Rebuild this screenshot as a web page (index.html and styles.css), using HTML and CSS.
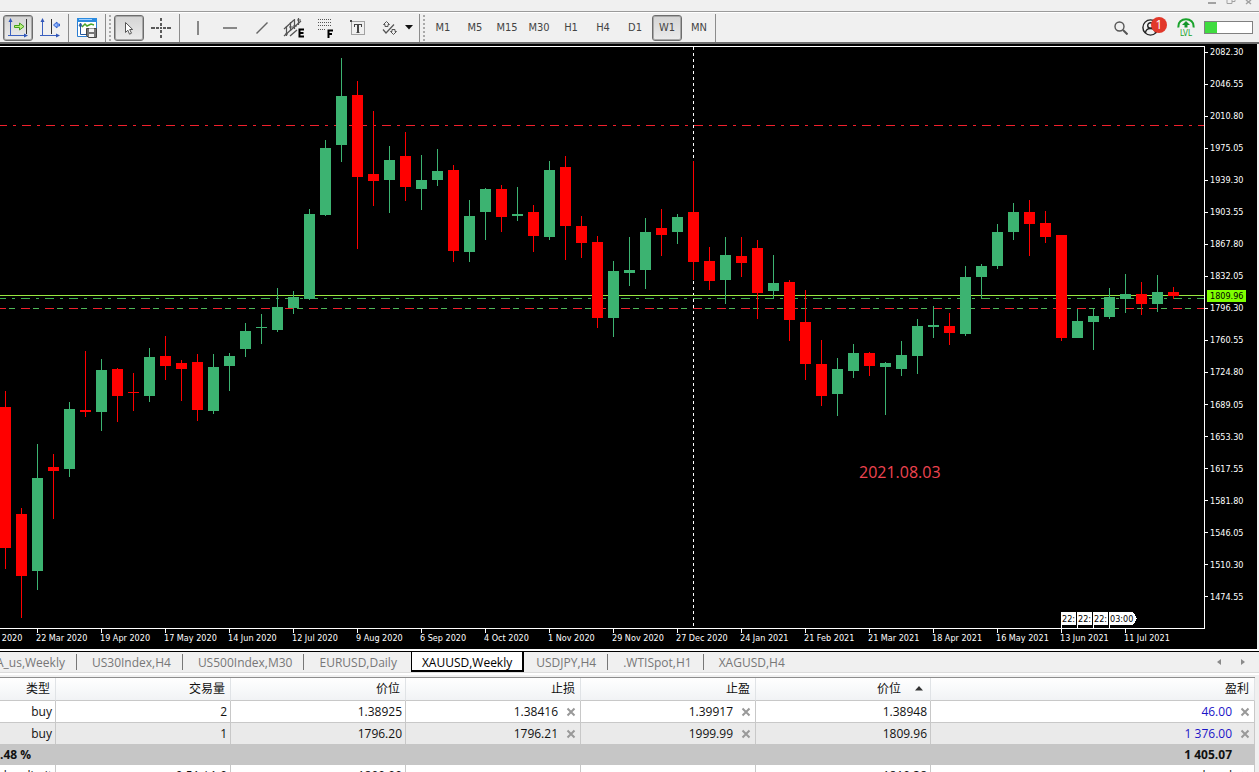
FILE: index.html
```html
<!DOCTYPE html>
<html lang="zh-CN">
<head>
<meta charset="utf-8">
<title>XAUUSD,Weekly</title>
<link rel="stylesheet" href="styles.css">
</head>
<body>
<header class="titlebar">
  <svg class="window-controls" width="48" height="5" viewBox="0 0 48 5" fill="none" stroke="#a2a2a2" aria-hidden="true">
    <path d="M1 3h8" stroke-width="2"/><path d="M20 0v3.500h5V0M25 1.500h3V0"/><path d="M39 4l5-4M44 4l-5-4" stroke-width="1.500"/>
  </svg>
</header>

<nav class="toolbar">
  <div class="group">
    <button class="tool pressed" aria-label="Auto scroll"><svg width="20" height="20" viewBox="0 0 20 20" fill="none">
      <path d="M2.500 18V2M0 17.500h19" stroke="#3a5fc0"/><path d="M2.500 0l-2 4h4zM20 17.500l-4-2v4z" fill="#2f55b8"/><path d="M18.500 1v15" stroke="#333"/><path d="M6.500 7.500h5V5l4.500 3.500-4.500 3.500V9.500h-5z" fill="#b9f07e" stroke="#43a01c"/></svg></button>
    <button class="tool" aria-label="Chart shift"><svg width="20" height="20" viewBox="0 0 20 20" fill="none">
      <path d="M2.500 18V2M0 17.500h19" stroke="#3a5fc0"/><path d="M2.500 0l-2 4h4zM20 17.500l-4-2v4z" fill="#2f55b8"/><path d="M11.500 1v15" stroke="#333"/><path d="M19.500 6h-2.500V4l-3.500 3 3.500 3V8h2.500z" fill="#8fb6ff" stroke="#3564d0"/></svg></button>
  </div>
  <span class="sep"></span>
  <div class="group">
    <button class="tool" aria-label="Templates"><svg width="20" height="20" viewBox="0 0 20 20" fill="none">
      <path d="M.5.5h19v18H.5z" fill="#fff" stroke="#2b7ed2"/><path d="M0 0h20v4H0z" fill="#2b8be0"/><path d="M2 1.500h13" stroke="#9fd0ff"/><path d="M3.500 6v10.500h6M3.500 5L2 8h3z" stroke="#24589c"/><path d="M5 9l3-3 2 2 4-2 3 1" stroke="#49a52a" stroke-width="1.500"/><path d="M9.500 10.500h10v9h-8l-2-2z" fill="#777" stroke="#444"/><path d="M12 10.500h5V14h-5zM12 16h5v3h-5z" fill="#f2f2f2"/></svg></button>
  </div>
  <span class="sep"></span><span class="grip"></span>
  <div class="group">
    <button class="tool pressed" aria-label="Cursor"><svg width="20" height="20" viewBox="0 0 20 20"><path d="M6.500 4.500v10l2.300-2.300 1.700 4 2-1-1.800-3.700h3z" fill="#fff" stroke="#555"/></svg></button>
    <button class="tool" aria-label="Crosshair"><svg width="20" height="20" viewBox="0 0 20 20" fill="none" stroke="#5a5a5a" stroke-width="2"><path d="M10 0v3M10 5v3M10 12v3M10 17v3M0 10h4M5 10h3M12 10h3M16 10h4M9 10h2"/></svg></button>
  </div>
  <span class="sep"></span>
  <div class="group">
    <button class="tool" aria-label="Vertical line"><svg width="20" height="20" viewBox="0 0 20 20"><path d="M10 3v14" stroke="#666" stroke-width="1.500"/></svg></button>
    <button class="tool" aria-label="Horizontal line"><svg width="20" height="20" viewBox="0 0 20 20"><path d="M3 10h14" stroke="#666" stroke-width="1.500"/></svg></button>
    <button class="tool" aria-label="Trendline"><svg width="20" height="20" viewBox="0 0 20 20"><path d="M4.500 15.500l11-11" stroke="#666" stroke-width="1.500"/></svg></button>
    <button class="tool" aria-label="Equidistant channel"><svg width="22" height="20" viewBox="0 0 22 20" fill="none" stroke="#555"><path d="M1 11L11 2M1 18L18 3M7 18l7-6" stroke-width="1.300"/><path d="M3.500 8v10M2 16h3M7.500 4v9M6 9h4M11.500 1v10M10 8h4M15.500 0v7M14 2h4" stroke-width="1.200"/><path d="M21 11.500h-4.500v7H21M16 15h4.500" stroke="#000" stroke-width="2"/></svg></button>
    <button class="tool" aria-label="Fibonacci"><svg width="20" height="20" viewBox="0 0 20 20" fill="none"><path d="M2 1.500h14M2 4.500h14M2 7.500h14" stroke="#555" stroke-dasharray="1 1"/><path d="M2 11.500h8" stroke="#555" stroke-dasharray="1 1"/><path d="M17 12.500h-4.500V20M12 16h4" stroke="#000" stroke-width="2"/></svg></button>
    <button class="tool" aria-label="Text"><svg width="20" height="20" viewBox="0 0 20 20" fill="none"><path d="M3.500 3.500h13v13h-13z" stroke="#555" stroke-dasharray="1 1"/><path d="M2 2h2v2H2z" fill="#444"/><path d="M6 6.500h8M6.500 6v3M13.500 6v3M8.500 14.500h3" stroke="#444"/><path d="M10 6v9" stroke="#444" stroke-width="2"/></svg></button>
    <button class="tool" aria-label="Arrows"><svg width="20" height="20" viewBox="0 0 20 20" fill="none" stroke="#555"><path d="M6.500 3.500l3 3H8v2H5v-2H3.500zM13.500 16.500l3-3H15v-2h-3v2h-1.500z"/><path d="M3 11.500l3 3.500 8-8.500" stroke-width="1.200"/></svg></button>
  </div>
  <button class="caret" aria-label="More objects"><svg width="8" height="5" viewBox="0 0 8 5"><path d="M0 0h8L4 4.500z" fill="#111"/></svg></button>
  <span class="sep"></span><span class="grip"></span>
  <div class="group">
    <button class="tool">M1</button><button class="tool">M5</button><button class="tool">M15</button><button class="tool">M30</button><button class="tool">H1</button><button class="tool">H4</button><button class="tool">D1</button><button class="tool pressed">W1</button><button class="tool">MN</button>
  </div>
  <span class="sep end"></span>
  <div class="status">
    <button class="plain" aria-label="Search"><svg width="14" height="14" viewBox="0 0 14 14" fill="none" stroke="#555"><circle cx="5.500" cy="5.500" r="4.500" stroke-width="1.400"/><path d="M9 9l4.500 4.500" stroke-width="2"/></svg></button>
    <button class="plain account" aria-label="Account"><svg width="17" height="17" viewBox="0 0 17 17" fill="none" stroke="#222" stroke-width="1.400"><circle cx="8.500" cy="8.500" r="7.600"/><circle cx="8.500" cy="6.500" r="2.800"/><path d="M3.500 14c0-6 10-6 10 0"/></svg><span class="badge">1</span></button>
    <div class="level"><svg width="18" height="11" viewBox="0 0 18 11"><path d="M1.500 9.500C0-1.500 18-1.500 16.500 9.500" fill="none" stroke="#1aa32c" stroke-width="2"/><path d="M9 3l4 4h-2.500v2.500h-3V7H5z" fill="#12952a"/></svg><span>LVL</span></div>
    <div class="meter"><span class="meter-fill"></span></div>
  </div>
</nav>

<main class="chart">
  <svg class="plot" viewBox="0 44 1205 589" preserveAspectRatio="xMaxYMin slice" fill="none">
    <path class="guide" d="M693.500 47V627"/>
    <path class="limit" d="M-2 125.500H1204"/>
    <path class="bid" d="M0 295.500H1204"/>
    <path class="entry" d="M-3 298.500H1204"/>
    <path class="limit" d="M-3 308.500H1204"/>
    <path class="entry-short" d="M9 308.500H1204"/>
    <path class="wick down" d="M5.500 391V569M21.500 508V618M53.500 454V519M85.500 351V417M117.500 368V422M133.500 373V411M165.500 336V380M181.500 360V401M197.500 354V421M357.500 81V249M373.500 111V206M405.500 132V201M453.500 165V262M501.500 185V232M533.500 205V252M565.500 156V260M581.500 216V258M597.500 236V328M661.500 209V256M693.500 161V280M709.500 247V290M741.500 237V277M757.500 240V319M789.500 280V341M805.500 290V380M821.500 340V406M869.500 352V376M949.500 313V345M1029.500 200V256M1045.500 211V243M1061.500 235V341M1141.500 282V315M1173.500 287V299"/>
    <path class="wick up" d="M37.500 444V590M69.500 402V477M101.500 359V431M149.500 348V402M213.500 354V414M229.500 353V391M245.500 323V357M261.500 314V344M277.500 288V332M293.500 291V314M309.500 209V300M325.500 140V216M341.500 58V162M389.500 146V213M421.500 155V210M437.500 149V186M469.500 200V262M485.500 188V240M517.500 187V221M549.500 161V240M613.500 261V337M629.500 237V286M645.500 218V289M677.500 214V244M725.500 237V304M773.500 255V299M837.500 358V416M853.500 344V378M885.500 362V415M901.500 341V376M917.500 319V374M933.500 306V338M965.500 266V336M981.500 264V298M997.500 224V269M1013.500 203V240M1077.500 309V338M1093.500 309V350M1109.500 288V319M1125.500 274V313M1157.500 275V312"/>
    <path class="body down" d="M5.500 407V548M21.500 514V576M53.500 467V471M85.500 410V412M117.500 369V396M133.500 392V393M165.500 356V366M181.500 363V369M197.500 362V410M357.500 95V177M373.500 174V181M405.500 156V187M453.500 170V251M501.500 189V217M533.500 212V236M565.500 167V226M581.500 226V243M597.500 242V318M661.500 228V235M693.500 212V262M709.500 261V281M741.500 256V263M757.500 248V293M789.500 282V320M805.500 322V364M821.500 364V396M869.500 353V366M949.500 326V333M1029.500 212V224M1045.500 223V237M1061.500 235V338M1141.500 294V304M1173.500 292V296"/>
    <path class="body up" d="M37.500 478V571M69.500 409V469M101.500 370V412M149.500 357V396M213.500 367V411M229.500 356V366M245.500 331V349M261.500 327V328M277.500 307V330M293.500 297V308M309.500 214V299M325.500 148V215M341.500 96V145M389.500 160V180M421.500 180V189M437.500 171V180M469.500 216V252M485.500 189V212M517.500 214V216M549.500 170V237M613.500 271V318M629.500 270V273M645.500 232V270M677.500 217V232M725.500 255V280M773.500 283V291M837.500 369V394M853.500 353V371M885.500 363V367M901.500 355V369M917.500 326V356M933.500 325V327M965.500 277V334M981.500 266V277M997.500 232V266M1013.500 212V232M1077.500 321V338M1093.500 316V322M1109.500 297V317M1125.500 294V299M1157.500 292V304"/>
    <path class="frame" d="M0 46.500H1204.500V628.500H0"/>
    <path class="frame" d="M37.500 629v4M101.500 629v4M165.500 629v4M229.500 629v4M293.500 629v4M357.500 629v4M421.500 629v4M485.500 629v4M549.500 629v4M613.500 629v4M677.500 629v4M741.500 629v4M805.500 629v4M869.500 629v4M933.500 629v4M997.500 629v4M1061.500 629v4M1125.500 629v4"/>
    <text class="note" x="859" y="478">2021.08.03</text>
    <path d="M1061 612H1133l4 6.500-4 6.500H1062v3h-1z" fill="#fff"/>
    <path d="M1076.500 612v13M1092.500 612v13M1108.500 612v13" stroke="#000"/>
    <path class="frame" d="M1077.500 612v16M1093.500 612v16M1109.500 612v16"/>
    <text class="event" x="1062" y="622">22:</text><text class="event" x="1078" y="622">22:</text><text class="event" x="1094" y="622">22:</text><text class="event" x="1110" y="622">03:00</text>
  </svg>
  <ol class="prices">
    <li>2082.30</li><li>2046.55</li><li>2010.80</li><li>1975.05</li><li>1939.30</li><li>1903.55</li><li>1867.80</li><li>1832.05</li><li>1796.30</li><li>1760.55</li><li>1724.80</li><li>1689.05</li><li>1653.30</li><li>1617.55</li><li>1581.80</li><li>1546.05</li><li>1510.30</li><li>1474.55</li>
  </ol>
  <ol class="dates">
    <li>23 Feb 2020</li><li>22 Mar 2020</li><li>19 Apr 2020</li><li>17 May 2020</li><li>14 Jun 2020</li><li>12 Jul 2020</li><li>9 Aug 2020</li><li>6 Sep 2020</li><li>4 Oct 2020</li><li>1 Nov 2020</li><li>29 Nov 2020</li><li>27 Dec 2020</li><li>24 Jan 2021</li><li>21 Feb 2021</li><li>21 Mar 2021</li><li>18 Apr 2021</li><li>16 May 2021</li><li>13 Jun 2021</li><li>11 Jul 2021</li>
  </ol>
  <output class="price-tag">1809.96</output>
</main>

<nav class="tabs">
  <button class="tab first">A_us,Weekly</button>
  <button class="tab">US30Index,H4</button>
  <button class="tab">US500Index,M30</button>
  <button class="tab last">EURUSD,Daily</button>
  <button class="tab active">XAUUSD,Weekly</button>
  <button class="tab">USDJPY,H4</button>
  <button class="tab">.WTISpot,H1</button>
  <button class="tab last">XAGUSD,H4</button>
  <div class="scrollers">
    <button class="plain" aria-label="Previous"><svg width="4" height="6" viewBox="0 0 4 6"><path d="M4 0v6L0 3z" fill="#8a8a8a"/></svg></button>
    <button class="plain" aria-label="Next"><svg width="4" height="6" viewBox="0 0 4 6"><path d="M0 0v6l4-3z" fill="#8a8a8a"/></svg></button>
  </div>
</nav>

<section class="terminal">
<table class="orders">
  <colgroup><col class="c-type"><col class="c-num"><col class="c-num"><col class="c-num"><col class="c-num"><col class="c-num"><col></colgroup>
  <thead><tr><th>类型</th><th>交易量</th><th>价位</th><th>止损</th><th>止盈</th><th>价位<svg class="sort" width="8" height="5" viewBox="0 0 8 5"><path d="M4 0l4 4.500H0z" fill="#333"/></svg></th><th>盈利</th></tr></thead>
  <tbody>
    <tr><td>buy</td><td>2</td><td>1.38925</td>
      <td>1.38416<button class="close" aria-label="Clear"><svg width="10" height="10" viewBox="0 0 10 10"><path d="M1.500 1.500l7 7M8.500 1.500l-7 7"/></svg></button></td>
      <td>1.39917<button class="close" aria-label="Clear"><svg width="10" height="10" viewBox="0 0 10 10"><path d="M1.500 1.500l7 7M8.500 1.500l-7 7"/></svg></button></td>
      <td>1.38948</td><td class="profit">46.00<button class="close" aria-label="Close"><svg width="10" height="10" viewBox="0 0 10 10"><path d="M1.500 1.500l7 7M8.500 1.500l-7 7"/></svg></button></td></tr>
    <tr class="alt"><td>buy</td><td>1</td><td>1796.20</td>
      <td>1796.21<button class="close" aria-label="Clear"><svg width="10" height="10" viewBox="0 0 10 10"><path d="M1.500 1.500l7 7M8.500 1.500l-7 7"/></svg></button></td>
      <td>1999.99<button class="close" aria-label="Clear"><svg width="10" height="10" viewBox="0 0 10 10"><path d="M1.500 1.500l7 7M8.500 1.500l-7 7"/></svg></button></td>
      <td>1809.96</td><td class="profit">1 376.00<button class="close" aria-label="Close"><svg width="10" height="10" viewBox="0 0 10 10"><path d="M1.500 1.500l7 7M8.500 1.500l-7 7"/></svg></button></td></tr>
    <tr class="summary"><td colspan="6">.48 %</td><td class="total">1 405.07</td></tr>
    <tr><td>buy limit</td><td>0.51 / 1.0</td><td>1800.00</td><td></td><td></td><td>1810.38</td>
      <td>placed<button class="close" aria-label="Delete"><svg width="10" height="10" viewBox="0 0 10 10"><path d="M1.500 1.500l7 7M8.500 1.500l-7 7"/></svg></button></td></tr>
  </tbody>
</table>
</section>
</body>
</html>
```
FILE: styles.css
```css
* { box-sizing: border-box; }

body {
  margin: 0;
  height: 100vh;
  overflow: hidden;
  background: #f0f0f0;
  color: #111;
  font: 12px/20px "Open Sans", "Noto Sans CJK SC", sans-serif;
}

button { margin: 0; padding: 0; border: 0; background: none; font: inherit; color: inherit; }
svg { display: block; }
ol { margin: 0; padding: 0; list-style: none; }

.titlebar { display: flex; justify-content: flex-end; height: 11px; padding-right: 4px; }

/* Toolbar */
.toolbar {
  display: flex;
  align-items: center;
  height: 33px;
  padding: 1px 6px 0 3px;
  border-top: 1px solid #9a9a9a;
  border-bottom: 2px solid #6c6c6c;
  background: #f0f0f0;
  box-shadow: inset 0 1px #fff;
}
.group { display: flex; gap: 2px; }
.tool {
  display: flex;
  align-items: center;
  justify-content: center;
  width: 30px;
  height: 26px;
  border: 1px solid transparent;
  border-radius: 3px;
  color: #444;
  font: 11px/14px "DejaVu Sans Condensed", "DejaVu Sans", sans-serif;
}
.tool svg { flex: none; }
.tool.pressed {
  border: 1px solid #6d6d6d;
  background: linear-gradient(#d4d4d4, #ebebeb);
  box-shadow: inset 0 0 0 1px #a8a8a8;
}
.sep { width: 1px; height: 28px; margin: 0 3px; background: #8c8c8c; }
.sep.end { margin-left: 1px; }
.grip {
  width: 2px;
  height: 26px;
  margin-right: 3px;
  background: repeating-linear-gradient(#aaa 0 2px, transparent 2px 4px);
}
.caret { width: 11px; height: 26px; display: flex; align-items: center; }
.plain { display: block; }
.status { display: flex; align-items: center; margin-left: auto; }
.account { position: relative; margin-left: 14px; }
.badge {
  position: absolute;
  left: 9px;
  top: -2px;
  width: 16px;
  height: 16px;
  border-radius: 50%;
  background: #e2382a;
  color: #fff;
  font-size: 12px;
  line-height: 16px;
  text-align: center;
}
.level {
  display: flex;
  flex-direction: column;
  align-items: center;
  margin-left: 18px;
  color: #1aa32c;
  font: 8px/9px "DejaVu Sans Condensed", "DejaVu Sans", sans-serif;
}
.meter {
  width: 49px;
  height: 13px;
  margin-left: 9px;
  border: 1px solid #808080;
  background: #fff;
}
.meter-fill { display: block; width: 25%; height: 100%; background: #3fdc3f; }

/* Chart */
.chart {
  position: relative;
  display: grid;
  grid-template: auto 16px / minmax(0, 1fr) 52px;
  margin-right: 2px;
  background: #000;
  color: #fff;
  font: 9px/12px "DejaVu Sans Condensed", "DejaVu Sans", sans-serif;
}
.plot { width: 100%; height: 589px; shape-rendering: crispEdges; }
.frame { stroke: #fff; }
.guide { stroke: #fff; stroke-dasharray: 3 3; }
.limit { stroke: #f0202c; stroke-dasharray: 9 6 3 6; }
.bid { stroke: #98e840; }
.entry { stroke: #40b050; stroke-dasharray: 9 6 3 6; }
.entry-short { stroke: #50b858; stroke-dasharray: 6 18; }
.wick { stroke-width: 1; }
.body { stroke-width: 11; }
.down { stroke: #f00; }
.up { stroke: #3cb371; }
.note { fill: #ee4450; font: 16px "Open Sans", sans-serif; }
.event { fill: #000; font: 9px "DejaVu Sans Condensed", "DejaVu Sans", sans-serif; }
.prices {
  display: flex;
  flex-direction: column;
  justify-content: space-between;
  height: 557px;
  margin-top: 2px;
}
.prices li { display: flex; align-items: center; gap: 2px; }
.prices li::before { content: ""; width: 3px; height: 1px; background: #fff; }
.dates { display: flex; grid-column: 1 / -1; margin: -1px 0 0 -28px; overflow: hidden; }
.dates li { flex: none; width: 64px; white-space: nowrap; }
.price-tag {
  position: absolute;
  right: 11px;
  top: 246px;
  width: 39px;
  padding-left: 3px;
  background: #7fff00;
  color: #000;
}

/* Chart tabs */
.tabs {
  display: flex;
  height: 22px;
  margin-top: 2px;
  border-top: 1px solid #000;
  border-bottom: 1px solid #dcdcdc;
  outline: 2px solid #fff;
  color: #777;
}
.tab { position: relative; height: 20px; padding: 0 14px 0 13px; line-height: 21px; white-space: nowrap; }
.tab::after { content: ""; position: absolute; right: 12px; top: 2px; width: 1px; height: 16px; background: #777; }
.tab:not(.last):not(.active) { padding: 0 24px 0 3px; }
.tab.last, .tab.active + .tab { padding-left: 3px; }
.tab.last::after, .tab.active::after { content: none; }
.tab.first:not(.last) { margin-left: -7px; padding-right: 24px; }
.tab.active { border: 1px solid #000; border-width: 0 2px 2px 1px; background: #fff; color: #000; padding: 0 10px; }
.tab.active + .tab:not(.last) { padding-left: 12px; }
.scrollers { display: flex; align-items: center; gap: 20px; margin-left: auto; padding-right: 14px; }

/* Orders */
.terminal { margin: 4px 4px 0 0; border-top: 1px solid #8e8e8e; background: #fff; }
.orders { width: 100%; table-layout: fixed; border-collapse: separate; border-spacing: 0; }
.c-type { width: 56px; }
.c-num { width: 175px; }
th, td {
  height: 21px;
  padding: 0 3px 0 0;
  border-right: 1px solid #c8c8c8;
  font-weight: 400;
  line-height: 20px;
  text-align: right;
  white-space: nowrap;
}
th {
  height: 23px;
  padding-right: 5px;
  border-bottom: 1px solid #c8c8c8;
  border-right-color: #e0e3e6;
  background: linear-gradient(#fff, #f1f3f5);
}
tbody tr:first-child td { height: 22px; border-bottom: 1px solid #c8c8c8; }
.alt td { background: #eaeaea; }
.summary td { height: 21px; border: 0; background: #c6c6c6; font-weight: 700; text-align: left; }
.summary .total { padding-right: 23px; text-align: right; }
.profit { color: #1a14c8; }
.sort { display: inline-block; margin: 0 2px 2px 14px; vertical-align: middle; }
.close { display: inline-block; margin: 0 1px 0 8px; vertical-align: middle; }
.close svg { stroke: #999; stroke-width: 2; }
```
